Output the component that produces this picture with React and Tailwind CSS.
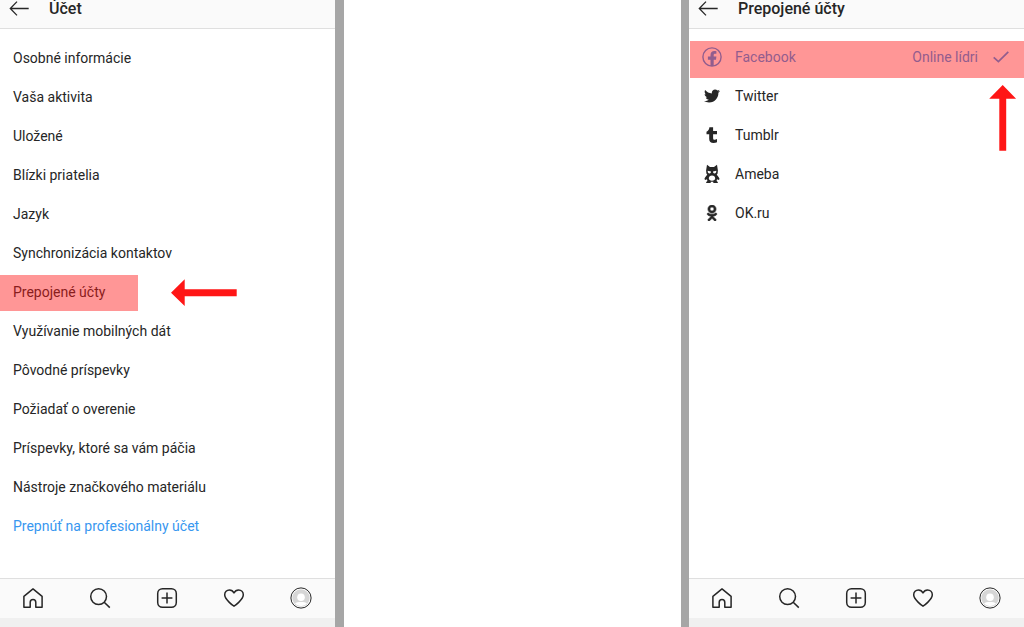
import { FaTwitter, FaOdnoklassniki } from 'react-icons/fa'

const ACCOUNT_ITEMS = [
  'Osobné informácie',
  'Vaša aktivita',
  'Uložené',
  'Blízki priatelia',
  'Jazyk',
  'Synchronizácia kontaktov',
  'Prepojené účty',
  'Využívanie mobilných dát',
  'Pôvodné príspevky',
  'Požiadať o overenie',
  'Príspevky, ktoré sa vám páčia',
  'Nástroje značkového materiálu',
]

const NETWORKS = [
  { name: 'Facebook', Icon: FacebookIcon, linkedAs: 'Online lídri' },
  { name: 'Twitter', Icon: TwitterIcon },
  { name: 'Tumblr', Icon: TumblrIcon },
  { name: 'Ameba', Icon: AmebaIcon },
  { name: 'OK.ru', Icon: OkIcon },
]

const NAV = [
  { label: 'Domov', Icon: HomeIcon },
  { label: 'Hľadať', Icon: SearchIcon },
  { label: 'Pridať', Icon: AddIcon },
  { label: 'Aktivita', Icon: HeartIcon },
  { label: 'Profil', Icon: ProfileIcon },
]

function FacebookIcon() {
  return (
    <svg viewBox="0 0 20 20" className="size-5" fill="none">
      <circle cx="10" cy="10" r="9.1" stroke="currentColor" strokeWidth="1.4" />
      <path
        fill="currentColor"
        d="M8.500 19v-6.300H5.900V9.600h2.600V8.200c0-2.700 1.500-4.100 3.800-4.100.8 0 1.500.1 2.100.2v2.500h-1.300c-1 0-1.400.5-1.400 1.300v1.500h2.700l-.4 3.100h-2.300V19z"
      />
    </svg>
  )
}

function TwitterIcon() {
  return <FaTwitter className="size-4" />
}

function TumblrIcon() {
  return (
    <svg viewBox="0 0 16 18" className="h-[18px] w-4" fill="currentColor">
      <path d="M5.400 1.200h3.700v3.900h3.900v3.100H9.100v3.700c0 1.300.5 1.800 1.600 1.800.7 0 1.400-.2 2.300-.6v3.200c-1 .5-2.200.7-3.500.7-2.700 0-4.300-1.400-4.300-4.100V8.200H2.500V5.700c1.800-.7 2.700-2.200 2.900-4.500z" />
    </svg>
  )
}

function AmebaIcon() {
  return (
    <svg viewBox="0 0 16 20" className="h-5 w-4" fill="currentColor">
      <path d="M3 .8 6 3h4l3-2.200.9 5.600-.3 3.200-.9 1.200c1 .9 2 2.200 2.900 4.100l-.9 1.100-1.700-.7-.4 1.800 1.200.8v1.100H9.300v-1.300H6.700V19H2.200v-1.100l1.200-.8-.4-1.800-1.700.7-.9-1.100c.9-1.900 1.900-3.200 2.900-4.100l-.9-1.200-.3-3.200z" />
      <path
        fill="#fff"
        d="M3.700 6.700 7 7.500c0 1.300-.6 1.900-1.600 1.900-1.100 0-1.800-.9-1.700-2.700zM12.300 6.700 9 7.500c0 1.300.6 1.900 1.600 1.900 1.100 0 1.800-.9 1.700-2.700zM8 11.400c1.900 0 3.200 1.200 3.200 2.900 0 1.600-1.300 2.500-3.200 2.500s-3.200-.9-3.200-2.500c0-1.700 1.300-2.900 3.200-2.900z"
      />
    </svg>
  )
}

function OkIcon() {
  return <FaOdnoklassniki className="size-4" stroke="currentColor" strokeWidth="22" />
}

function BackIcon() {
  return (
    <svg viewBox="0 0 20 16" className="h-4 w-5" fill="none" stroke="currentColor" strokeWidth="1.3">
      <path d="M8 .6 1.300 7.500l6.700 6.900M1.400 7.500h18.300" />
    </svg>
  )
}

function CheckIcon() {
  return (
    <svg viewBox="0 0 16 12" className="h-3 w-4" fill="none" stroke="currentColor" strokeWidth="1.7">
      <path d="m.7 6.300 4.700 4.300L15.300.8" />
    </svg>
  )
}

function HomeIcon() {
  return (
    <svg viewBox="0 0 22 22" className="size-[22px]" fill="none" stroke="currentColor" strokeWidth="1.500">
      <path
        strokeLinejoin="round"
        d="M1.900 9.300 11 1.900l9.100 7.400v11h-6.300v-4.800c0-1.800-1.100-3-2.800-3s-2.800 1.200-2.800 3v4.800H1.900z"
      />
    </svg>
  )
}

function SearchIcon() {
  return (
    <svg viewBox="0 0 22 22" className="size-[22px]" fill="none" stroke="currentColor" strokeWidth="1.500">
      <circle cx="9.600" cy="9.600" r="7.900" />
      <path d="m15.200 15.200 5.600 5.400" />
    </svg>
  )
}

function AddIcon() {
  return (
    <svg viewBox="0 0 22 22" className="size-[22px]" fill="none" stroke="currentColor" strokeWidth="1.500">
      <rect x="1.700" y="1.700" width="18.600" height="18.600" rx="4.800" />
      <path d="M11 5.600v10.800M5.600 11h10.800" />
    </svg>
  )
}

function HeartIcon() {
  return (
    <svg viewBox="0 0 22 22" className="size-[22px]" fill="none" stroke="currentColor" strokeWidth="1.500">
      <path
        strokeLinejoin="round"
        d="M11 19.200c-.8-.5-9.300-6.600-9.300-11.400 0-2.900 2.100-4.900 4.700-4.900 2.200 0 3.700 1.200 4.600 3 .9-1.800 2.400-3 4.600-3 2.600 0 4.700 2 4.700 4.900 0 4.800-8.500 10.900-9.300 11.400z"
      />
    </svg>
  )
}

function ProfileIcon() {
  return (
    <svg viewBox="0 0 22 22" className="size-[22px]" fill="none">
      <circle cx="11" cy="11" r="10.100" fill="#fff" stroke="currentColor" strokeWidth="1" />
      <circle cx="11" cy="11" r="8.700" fill="#d6d6d6" />
      <circle cx="11" cy="10.200" r="3.800" fill="#fff" />
      <path fill="#fff" d="M5 16.300c1-.9 3.300-1.200 6-1.200s5 .3 6 1.200c-1.500 1.700-3.600 2.700-6 2.700s-4.500-1-6-2.700z" />
    </svg>
  )
}

function Header({ title }) {
  return (
    <header className="flex items-center gap-5 border-b border-[#dfdfdf] bg-[#fafafa] pr-3 pb-[11px] pl-[9px]">
      <button type="button" aria-label="Späť">
        <BackIcon />
      </button>
      <h1 className="text-base leading-[17px] font-medium">{title}</h1>
    </header>
  )
}

function BottomNav() {
  return (
    <div className="border-t border-[#dfdfdf] bg-[#f0f0f0] pb-[9px]">
      <nav className="grid h-[39px] grid-cols-5 bg-[#fafafa]">
        {NAV.map(({ label, Icon }) => (
          <button key={label} type="button" aria-label={label} className="flex items-center justify-center pr-px pb-px">
            <Icon />
          </button>
        ))}
      </nav>
    </div>
  )
}

function Phone({ title, children }) {
  return (
    <section className="flex min-w-0 flex-col">
      <Header title={title} />
      <main className="flex-1 pt-[9px]">{children}</main>
      <BottomNav />
    </section>
  )
}

/* Semi-transparent red box laid over a highlighted row */
function Highlight({ className }) {
  return <span className={`pointer-events-none absolute bg-[#ff1616]/45 ${className}`} />
}

function ArrowLeft() {
  return (
    <svg viewBox="0 0 66 28" className="absolute top-[7px] left-[171px] h-7 w-[66px]" fill="#ff1616">
      <path d="M0 13.700 13.700.2v10.100h52v6.900h-52v9.900z" />
    </svg>
  )
}

function ArrowUp() {
  return (
    <svg viewBox="0 0 28 66" className="absolute top-[47px] right-[7px] h-[66px] w-7" fill="#ff1616">
      <path d="M13.700 0 .2 13.700h10.100v52h6.900v-52h9.900z" />
    </svg>
  )
}

export default function App() {
  return (
    <div className="grid min-h-screen grid-cols-[335fr_9px_337fr_8px_335fr] bg-white font-['Roboto',sans-serif] text-sm text-[#262626]">
      <Phone title="Účet">
        <ul>
          {ACCOUNT_ITEMS.map((item) => (
            <li key={item} className="relative">
              <a href="#" className="flex h-[39px] items-center px-[13px]">
                {item}
              </a>
              {item === 'Prepojené účty' && (
                <>
                  <Highlight className="top-[3px] left-0 h-9 w-[138px]" />
                  <ArrowLeft />
                </>
              )}
            </li>
          ))}
          <li>
            <a href="#" className="flex h-[39px] items-center px-[13px] text-[#3897f0]">
              Prepnúť na profesionálny účet
            </a>
          </li>
        </ul>
      </Phone>

      <div className="bg-[#a6a6a6]" />
      <div />
      <div className="bg-[#a6a6a6]" />

      <Phone title="Prepojené účty">
        <ul>
          {NETWORKS.map(({ name, Icon, linkedAs }) => (
            <li key={name} className="relative">
              <a
                href="#"
                className={`flex h-[39px] items-center pr-[15px] pb-px pl-[13px] ${linkedAs ? 'text-[#3897f0]' : ''}`}
              >
                <span className="mr-[13px] flex w-5 justify-center">
                  <Icon />
                </span>
                {name}
                {linkedAs && (
                  <span className="ml-auto flex items-center gap-[15px]">
                    {linkedAs}
                    <CheckIcon />
                  </span>
                )}
              </a>
              {linkedAs && (
                <>
                  <Highlight className="top-[3px] right-0 left-px h-[37px]" />
                  <ArrowUp />
                </>
              )}
            </li>
          ))}
        </ul>
      </Phone>
    </div>
  )
}
